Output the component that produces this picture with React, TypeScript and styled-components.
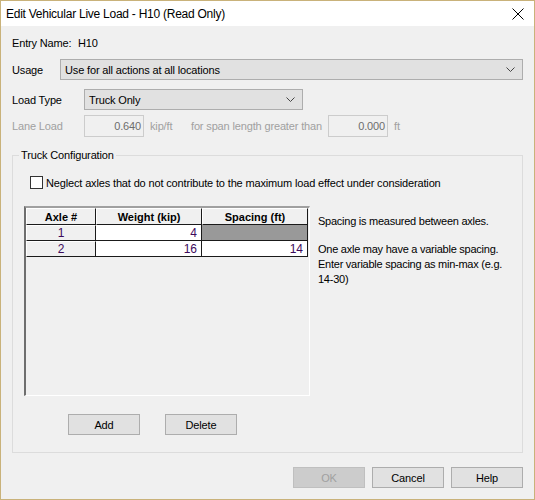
import React from "react";
import styled, { createGlobalStyle } from "styled-components";

const Global = createGlobalStyle`
  html, body { margin: 0; padding: 0; background: #f0f0f0; }
  * { box-sizing: border-box; }
`;

const UI = `"Liberation Sans", Arial, sans-serif`;

const Window = styled.div`
  width: 535px;
  height: 500px;
  border: 1px solid #c9b27a;
  border-top: none;
  background: #f0f0f0;
  display: flex;
  flex-direction: column;
  font-family: ${UI};
  font-size: 11px;
  letter-spacing: -0.15px;
  color: #000;
`;

const TitleBar = styled.div`
  height: 26px;
  background: #fff;
  display: flex;
  align-items: center;
  justify-content: space-between;
  padding: 0 10px 0 5px;
  border-top: 1px solid #c9b27a;
`;

const Title = styled.span`
  font-size: 12px;
  letter-spacing: -0.25px;
`;

const Body = styled.div`
  flex: 1;
  display: flex;
  flex-direction: column;
  padding: 7px 11px 0 11px;
`;

const Row = styled.div<{ $h: number; $mt: number }>`
  display: flex;
  align-items: center;
  height: ${(p) => p.$h}px;
  margin-top: ${(p) => p.$mt}px;
`;

const Label = styled.span<{ $w?: number; $disabled?: boolean; $pl?: number }>`
  width: ${(p) => (p.$w ? `${p.$w}px` : "auto")};
  padding-left: ${(p) => p.$pl ?? 0}px;
  flex: none;
  color: ${(p) => (p.$disabled ? "#a0a0a0" : "#000")};
  white-space: nowrap;
`;

const Combo = styled.div<{ $w?: number }>`
  height: 21px;
  width: ${(p) => (p.$w ? `${p.$w}px` : "auto")};
  flex: ${(p) => (p.$w ? "none" : "1")};
  background: #e1e1e1;
  border: 1px solid #adadad;
  display: flex;
  align-items: center;
  justify-content: space-between;
  padding: 0 7px 0 4px;
`;

const Input = styled.div<{ $w: number }>`
  width: ${(p) => p.$w}px;
  height: 22px;
  border: 1px solid #cccccc;
  background: #f0f0f0;
  color: #6d6d6d;
  display: flex;
  align-items: center;
  justify-content: flex-end;
  padding-right: 2px;
  flex: none;
`;

const Group = styled.fieldset`
  margin: 12px 0 0 0;
  height: 304px;
  border: 1px solid #dcdcdc;
  padding: 0 0 0 11px;
  display: flex;
  flex-direction: column;
`;

const Legend = styled.legend`
  padding: 0 2px;
  margin-left: -5px;
  line-height: 13px;
`;

const CheckRow = styled.label`
  display: flex;
  align-items: center;
  gap: 3px;
  margin: 14px 0 0 6px;
  height: 13px;
`;

const Box = styled.span`
  width: 13px;
  height: 13px;
  border: 1px solid #333;
  background: #fff;
  flex: none;
`;

const GridArea = styled.div`
  display: flex;
  gap: 8px;
  margin-top: 17px;
`;

const Table = styled.div`
  width: 286px;
  height: 190px;
  border-style: solid;
  border-width: 2px 1px 1px 2px;
  border-color: #a0a0a0 #fff #fff #6e6e6e;
  background: #f0f0f0;
  display: grid;
  grid-template-columns: 70px 106px 106px;
  grid-template-rows: 17px 16px 16px;
  align-content: start;
  letter-spacing: 0;
`;

const HeadCell = styled.div<{ $num?: boolean }>`
  background: #f0f0f0;
  border-style: solid;
  border-width: 1px;
  border-color: #fff #1a1a1a #1a1a1a #fff;
  display: flex;
  align-items: center;
  justify-content: center;
  font-weight: ${(p) => (p.$num ? "normal" : "bold")};
  font-size: ${(p) => (p.$num ? "12px" : "11px")};
  color: ${(p) => (p.$num ? "#3d0a5c" : "#000")};
`;

const Cell = styled.div<{ $gray?: boolean }>`
  background: ${(p) => (p.$gray ? "#999999" : "#fff")};
  border-right: 1px solid #1a1a1a;
  border-bottom: 1px solid #1a1a1a;
  display: flex;
  align-items: center;
  justify-content: flex-end;
  padding-right: 4px;
  font-size: 12px;
  color: #3d0a5c;
`;

const Info = styled.div`
  padding-top: 8px;
  line-height: 15px;
  width: 190px;
  letter-spacing: -0.25px;
  p { margin: 0 0 13px 0; }
`;

const BtnRow = styled.div<{ $mt: number; $pl?: number; $gap: number; $end?: boolean }>`
  display: flex;
  gap: ${(p) => p.$gap}px;
  margin-top: ${(p) => p.$mt}px;
  padding-left: ${(p) => p.$pl ?? 0}px;
  justify-content: ${(p) => (p.$end ? "flex-end" : "flex-start")};
`;

const Button = styled.div<{ $disabled?: boolean }>`
  width: 72px;
  height: 21px;
  background: ${(p) => (p.$disabled ? "#cccccc" : "#e1e1e1")};
  border: 1px solid ${(p) => (p.$disabled ? "#bfbfbf" : "#adadad")};
  color: ${(p) => (p.$disabled ? "#a0a0a0" : "#000")};
  display: flex;
  align-items: center;
  justify-content: center;
`;

const Chevron = () => (
  <svg width="9" height="5" viewBox="0 0 9 5">
    <polyline points="0.5,0.5 4.5,4.5 8.5,0.5" fill="none" stroke="#444" strokeWidth="1" />
  </svg>
);

const CloseIcon = () => (
  <svg width="12" height="12" viewBox="0 0 12 12">
    <path d="M0.5 0.5 L11.5 11.5 M11.5 0.5 L0.5 11.5" stroke="#000" strokeWidth="1" />
  </svg>
);

export default function App() {
  return (
    <>
      <Global />
      <Window>
        <TitleBar>
          <Title>Edit Vehicular Live Load - H10 (Read Only)</Title>
          <CloseIcon />
        </TitleBar>
        <Body>
          <Row $h={20} $mt={0}>
            <Label $w={66}>Entry Name:</Label>
            <Label>H10</Label>
          </Row>
          <Row $h={21} $mt={6}>
            <Label $w={48}>Usage</Label>
            <Combo>
              <span>Use for all actions at all locations</span>
              <Chevron />
            </Combo>
          </Row>
          <Row $h={21} $mt={9}>
            <Label $w={72}>Load Type</Label>
            <Combo $w={219}>
              <span>Truck Only</span>
              <Chevron />
            </Combo>
          </Row>
          <Row $h={22} $mt={5}>
            <Label $w={72} $disabled>Lane Load</Label>
            <Input $w={60}>0.640</Input>
            <Label $w={47} $disabled $pl={6}>kip/ft</Label>
            <Label $w={137} $disabled>for span length greater than</Label>
            <Input $w={60}>0.000</Input>
            <Label $disabled $pl={6}>ft</Label>
          </Row>
          <Group>
            <Legend>Truck Configuration</Legend>
            <CheckRow>
              <Box />
              <span>Neglect axles that do not contribute to the maximum load effect under consideration</span>
            </CheckRow>
            <GridArea>
              <Table>
                <HeadCell>Axle #</HeadCell>
                <HeadCell>Weight (kip)</HeadCell>
                <HeadCell>Spacing (ft)</HeadCell>
                <HeadCell $num>1</HeadCell>
                <Cell>4</Cell>
                <Cell $gray />
                <HeadCell $num>2</HeadCell>
                <Cell>16</Cell>
                <Cell>14</Cell>
              </Table>
              <Info>
                <p>Spacing is measured between axles.</p>
                <p>
                  One axle may have a variable spacing.
                  <br />
                  Enter variable spacing as min-max (e.g. 14-30)
                </p>
              </Info>
            </GridArea>
            <BtnRow $mt={18} $pl={44} $gap={25}>
              <Button>Add</Button>
              <Button>Delete</Button>
            </BtnRow>
          </Group>
          <BtnRow $mt={14} $gap={7} $end>
            <Button $disabled>OK</Button>
            <Button>Cancel</Button>
            <Button>Help</Button>
          </BtnRow>
        </Body>
      </Window>
    </>
  );
}
